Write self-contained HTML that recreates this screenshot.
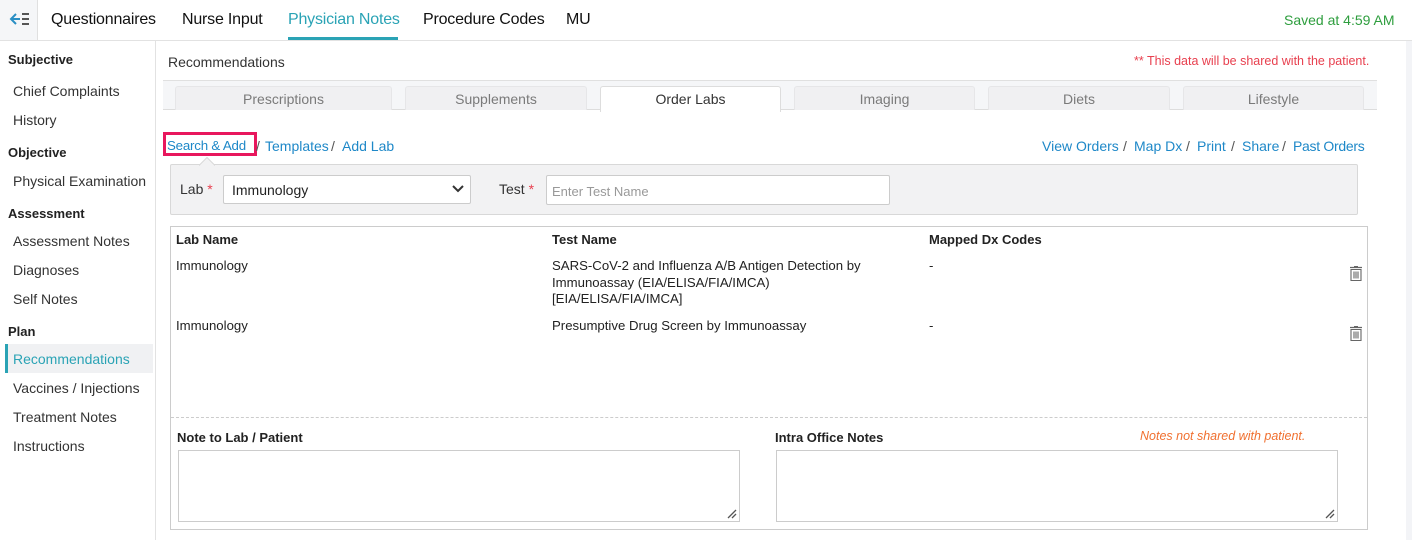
<!DOCTYPE html>
<html><head><meta charset="utf-8">
<style>
*{box-sizing:border-box;margin:0;padding:0}
body{width:1412px;height:540px;overflow:hidden;background:#fff;font-family:"Liberation Sans",sans-serif;color:#222;position:relative;font-size:14px}
.a{position:absolute;white-space:nowrap}
.nav{font-size:16px;color:#111;top:11px;letter-spacing:-0.2px}
.side{font-size:14px;color:#333}
.sh{font-size:13px;font-weight:bold;color:#222}
.tab{position:absolute;top:86px;height:24px;background:#f0f0f2;border:1px solid #e6e6e8;border-bottom:none;border-radius:3px 3px 0 0;color:#7a7a7a;font-size:14px;text-align:center;line-height:24px}
.lnk{color:#1e88c8;font-size:14px}
.sl{color:#555;font-size:14px}
.th{font-weight:bold;font-size:13px;color:#222}
.td{font-size:13.2px;color:#222;line-height:16.5px}
</style></head><body>
<div class="a" style="left:0;top:0;width:38px;height:40px;background:#f5f6f8;border-right:1px solid #e0e0e0"></div>
<svg class="a" style="left:9px;top:12px" width="22" height="14" viewBox="0 0 22 14"><path d="M7 2L2 7l5 5M2 7h9" stroke="#2a8fc4" stroke-width="2" fill="none"/><path d="M13 2h7M13 7h7M13 12h7" stroke="#555" stroke-width="2"/></svg>
<div class="a" style="left:0;top:40px;width:1412px;height:1px;background:#e2e2e2"></div>
<div class="a nav" style="left:51px">Questionnaires</div>
<div class="a nav" style="left:182px">Nurse Input</div>
<div class="a nav" style="left:288px;color:#2aa3b5">Physician Notes</div>
<div class="a" style="left:288px;top:37px;width:110px;height:3px;background:#2aa3b5"></div>
<div class="a nav" style="left:423px">Procedure Codes</div>
<div class="a nav" style="left:566px">MU</div>
<div class="a" style="left:1284px;top:12px;color:#2e9e3e;font-size:14px">Saved at 4:59 AM</div>
<div class="a" style="left:155px;top:41px;width:1px;height:499px;background:#e2e2e2"></div>
<div class="a sh" style="left:8px;top:52px">Subjective</div>
<div class="a side" style="left:13px;top:83px">Chief Complaints</div>
<div class="a side" style="left:13px;top:112px">History</div>
<div class="a sh" style="left:8px;top:145px">Objective</div>
<div class="a side" style="left:13px;top:173px">Physical Examination</div>
<div class="a sh" style="left:8px;top:206px">Assessment</div>
<div class="a side" style="left:13px;top:233px">Assessment Notes</div>
<div class="a side" style="left:13px;top:262px">Diagnoses</div>
<div class="a side" style="left:13px;top:291px">Self Notes</div>
<div class="a sh" style="left:8px;top:324px">Plan</div>
<div class="a" style="left:5px;top:344px;width:148px;height:29px;background:#f0f1f3;border-left:3px solid #2aa3b5"></div>
<div class="a side" style="left:13px;top:351px;color:#2aa3b5">Recommendations</div>
<div class="a side" style="left:13px;top:380px">Vaccines / Injections</div>
<div class="a side" style="left:13px;top:409px">Treatment Notes</div>
<div class="a side" style="left:13px;top:438px">Instructions</div>
<div class="a" style="left:1406px;top:41px;width:6px;height:499px;background:#f3f4f7"></div>
<div class="a" style="left:168px;top:54px;font-size:14px;color:#333">Recommendations</div>
<div class="a" style="left:1134px;top:54px;font-size:12.5px;color:#e8404f">** This data will be shared with the patient.</div>
<div class="a" style="left:163px;top:80px;width:1214px;height:30px;background:#f5f6f8;border-top:1px solid #e0e0e0;border-bottom:1px solid #ddd"></div>
<div class="tab" style="left:175px;width:217px">Prescriptions</div>
<div class="tab" style="left:405px;width:182px">Supplements</div>
<div class="tab" style="left:600px;width:181px;background:#fff;color:#333;height:26px;border-color:#ddd">Order Labs</div>
<div class="tab" style="left:794px;width:181px">Imaging</div>
<div class="tab" style="left:988px;width:182px">Diets</div>
<div class="tab" style="left:1183px;width:181px">Lifestyle</div>
<div class="a lnk" style="left:167px;top:138px;font-size:13.3px;letter-spacing:-0.2px">Search &amp; Add</div>
<div class="a" style="left:163px;top:132px;width:94px;height:24px;border:3px solid #e8175d"></div>
<div class="a sl" style="left:256px;top:138px">/</div>
<div class="a lnk" style="left:265px;top:138px">Templates</div>
<div class="a sl" style="left:331px;top:138px">/</div>
<div class="a lnk" style="left:342px;top:138px">Add Lab</div>
<div class="a lnk" style="left:1042px;top:138px">View Orders</div>
<div class="a sl" style="left:1123px;top:138px">/</div>
<div class="a lnk" style="left:1134px;top:138px">Map Dx</div>
<div class="a sl" style="left:1186px;top:138px">/</div>
<div class="a lnk" style="left:1197px;top:138px">Print</div>
<div class="a sl" style="left:1231px;top:138px">/</div>
<div class="a lnk" style="left:1242px;top:138px">Share</div>
<div class="a sl" style="left:1282px;top:138px">/</div>
<div class="a lnk" style="left:1293px;top:138px;letter-spacing:-0.3px">Past Orders</div>
<div class="a" style="left:170px;top:164px;width:1188px;height:51px;background:#f2f2f3;border:1px solid #d8d8d8;border-radius:2px"></div>
<svg class="a" style="left:199px;top:157px" width="16" height="9"><path d="M0 8.5L8 0.5 16 8.5" fill="#f2f2f3" stroke="#d8d8d8"/></svg>
<div class="a" style="left:180px;top:181px;font-size:14px;color:#333">Lab <span style="color:#e8404f">*</span></div>
<div class="a" style="left:223px;top:175px;width:248px;height:29px;background:#fff;border:1px solid #ccc;border-radius:2px"></div>
<div class="a" style="left:232px;top:182px;font-size:14px;color:#222">Immunology</div>
<svg class="a" style="left:452px;top:185px" width="12" height="8"><path d="M1 1l5 5 5-5" stroke="#333" stroke-width="2" fill="none"/></svg>
<div class="a" style="left:499px;top:181px;font-size:14px;color:#333">Test <span style="color:#e8404f">*</span></div>
<div class="a" style="left:546px;top:175px;width:344px;height:30px;background:#fff;border:1px solid #ccc;border-radius:2px"></div>
<div class="a" style="left:552px;top:184px;font-size:13px;color:#999">Enter Test Name</div>
<div class="a" style="left:170px;top:226px;width:1198px;height:304px;border:1px solid #ccc"></div>
<div class="a th" style="left:176px;top:232px">Lab Name</div>
<div class="a th" style="left:552px;top:232px">Test Name</div>
<div class="a th" style="left:929px;top:232px">Mapped Dx Codes</div>
<div class="a td" style="left:176px;top:258px">Immunology</div>
<div class="a td" style="left:552px;top:258px">SARS-CoV-2 and Influenza A/B Antigen Detection by<br>Immunoassay (EIA/ELISA/FIA/IMCA)<br>[EIA/ELISA/FIA/IMCA]</div>
<div class="a td" style="left:929px;top:258px">-</div>
<div class="a td" style="left:176px;top:318px">Immunology</div>
<div class="a td" style="left:552px;top:318px">Presumptive Drug Screen by Immunoassay</div>
<div class="a td" style="left:929px;top:318px">-</div>
<svg class="a" style="left:1349px;top:266px" width="14" height="15" viewBox="0 0 14 15"><path d="M1 1.5h12M5 0.5h4" stroke="#666" stroke-width="1.2"/><path d="M2 3.5h10v11H2z M5 5.5v7M7 5.5v7M9 5.5v7" stroke="#666" stroke-width="1.1" fill="none"/></svg>
<svg class="a" style="left:1349px;top:326px" width="14" height="15" viewBox="0 0 14 15"><path d="M1 1.5h12M5 0.5h4" stroke="#666" stroke-width="1.2"/><path d="M2 3.5h10v11H2z M5 5.5v7M7 5.5v7M9 5.5v7" stroke="#666" stroke-width="1.1" fill="none"/></svg>
<div class="a" style="left:171px;top:417px;width:1196px;height:0;border-top:1px dashed #ccc"></div>
<div class="a th" style="left:177px;top:430px">Note to Lab / Patient</div>
<div class="a th" style="left:775px;top:430px">Intra Office Notes</div>
<div class="a" style="left:1140px;top:429px;font-size:12.5px;font-style:italic;color:#f07030">Notes not shared with patient.</div>
<div class="a" style="left:178px;top:450px;width:562px;height:72px;border:1px solid #ccc"></div>
<div class="a" style="left:776px;top:450px;width:562px;height:72px;border:1px solid #ccc"></div>
<svg class="a" style="left:727px;top:509px" width="10" height="10"><path d="M1 9L9 1M5 9L9 5" stroke="#555" stroke-width="1.3"/></svg>
<svg class="a" style="left:1325px;top:509px" width="10" height="10"><path d="M1 9L9 1M5 9L9 5" stroke="#555" stroke-width="1.3"/></svg>
</body></html>
